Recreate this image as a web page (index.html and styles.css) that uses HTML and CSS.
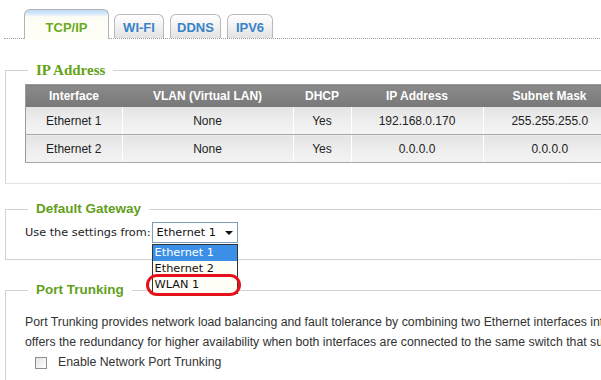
FILE: index.html
```html
<!DOCTYPE html>
<html>
<head>
<meta charset="utf-8">
<link rel="stylesheet" href="styles.css">
</head>
<body>
<div class="page">
  <div class="tabs">
    <div class="tab tab-active">TCP/IP</div>
    <div class="tab tab-wifi">WI-FI</div>
    <div class="tab tab-ddns">DDNS</div>
    <div class="tab tab-ipv6">IPV6</div>
  </div>

  <fieldset class="box box-ip">
    <legend class="legend legend-serif">IP Address</legend>
    <table class="iptable">
      <thead>
        <tr>
          <th class="c-if">Interface</th>
          <th class="c-vlan">VLAN (Virtual LAN)</th>
          <th class="c-dhcp">DHCP</th>
          <th class="c-ip">IP Address</th>
          <th class="c-mask">Subnet Mask</th>
        </tr>
      </thead>
      <tbody>
        <tr>
          <td>Ethernet 1</td>
          <td>None</td>
          <td>Yes</td>
          <td>192.168.0.170</td>
          <td>255.255.255.0</td>
        </tr>
        <tr>
          <td>Ethernet 2</td>
          <td>None</td>
          <td>Yes</td>
          <td>0.0.0.0</td>
          <td>0.0.0.0</td>
        </tr>
      </tbody>
    </table>
  </fieldset>

  <fieldset class="box box-gw">
    <legend class="legend">Default Gateway</legend>
    <div class="gw-row">
      <span class="gw-label">Use the settings from:</span>
      <div class="select-wrap">
        <div class="select"><span>Ethernet 1</span><span class="arrow"></span></div>
        <ul class="options">
          <li class="opt opt-sel">Ethernet 1</li>
          <li class="opt">Ethernet 2</li>
          <li class="opt">WLAN 1</li>
        </ul>
        <div class="ring"></div>
      </div>
    </div>
  </fieldset>

  <fieldset class="box box-pt">
    <legend class="legend">Port Trunking</legend>
    <p class="desc">Port Trunking provides network load balancing and fault tolerance by combining two Ethernet interfaces into one to increase the bandwidth beyond the limits of any single interface, and at the same time<br>offers the redundancy for higher availability when both interfaces are connected to the same switch that supports Port Trunking.</p>
    <label class="check-row"><span class="checkbox"></span><span>Enable Network Port Trunking</span></label>
  </fieldset>
</div>
</body>
</html>
```

FILE: styles.css
```css
html, body {
  margin: 0;
  padding: 0;
  background: #ffffff;
  overflow: hidden;
}
body {
  width: 601px;
  height: 380px;
  font-family: "Liberation Sans", Arial, sans-serif;
}
.page {
  width: 1000px;
}

/* Tabs */
.tabs {
  display: flex;
  align-items: flex-end;
  height: 38px;
  margin-left: 4px;
  padding-left: 20px;
  border-bottom: 1px dotted #9c9c9c;
}
.tab {
  box-sizing: border-box;
  height: 24px;
  border: 1px solid #b9b9b9;
  border-bottom: none;
  border-radius: 6px 6px 0 0;
  background: linear-gradient(#ffffff, #f3f3f3 45%, #e2e2e2);
  font: bold 13px/13px "Liberation Sans", Arial, sans-serif;
  color: #3a83c9;
  text-align: center;
  padding-bottom: 4px;
  display: flex;
  align-items: flex-end;
  justify-content: center;
}
.tab-active {
  width: 85px;
  height: 30px;
  margin-bottom: -1px;
  padding-bottom: 5px;
  margin-right: 5px;
  color: #6aab1e;
  background: linear-gradient(#bcdcf6 0, #d8eafa 4px, #fdfdf6 7px, #fffff8);
  border-color: #b3b3b3;
}
.tab-wifi { width: 50px; margin-right: 6px; }
.tab-ddns { width: 51px; margin-right: 6px; }
.tab-ipv6 { width: 46px; }

/* Fieldsets */
.box {
  margin: 0 0 0 5px;
  min-width: 0;
  width: 940px;
  box-sizing: border-box;
  border: 1px solid #d2d2d2;
  border-right: none;
  background: linear-gradient(100deg, #ffffff 60%, #f6f6f6);
}
.legend {
  margin-left: 3px;
  padding: 0 8px;
  font: bold 13.5px/16px "Liberation Sans", Arial, sans-serif;
  color: #62a01c;
}
.legend-serif {
  font: bold 15px/18px "Liberation Serif", "Times New Roman", serif;
  color: #63a316;
}
.box-ip {
  margin-top: 22px;
  padding: 5px 0 20px 19px;
  border-bottom-color: #e2e2e2;
}
.box-gw {
  margin-top: 17px;
  padding: 5px 0 16px 19px;
}
.box-pt {
  margin-top: 22px;
  padding: 14px 0 20px 19px;
}

/* Table */
.iptable {
  border-collapse: collapse;
  border: 1px solid #9a9a9a;
  font: 12px "Liberation Sans", Arial, sans-serif;
  color: #222;
}
.iptable th {
  height: 22px;
  padding: 0;
  background: linear-gradient(#8a8a8a, #787878);
  color: #ffffff;
  font-weight: bold;
  text-align: center;
}
.iptable td {
  height: 27px;
  padding: 0;
  text-align: center;
  background: linear-gradient(#e3e3e3, #efefef 60%, #f3f3f3);
  border-left: 1px solid #ffffff;
  border-bottom: 1px solid #a8a8a8;
}
.iptable td:first-child { border-left: none; }
.c-if { width: 96px; }
.c-vlan { width: 171px; }
.c-dhcp { width: 58px; }
.c-ip { width: 132px; }
.c-mask { width: 133px; }

/* Gateway row */
.gw-row {
  display: flex;
  align-items: center;
  height: 21px;
  font: 11.3px "DejaVu Sans", Verdana, sans-serif;
  color: #222;
}
.gw-label {
  margin-right: 1px;
}
.select-wrap {
  position: relative;
}
.select {
  box-sizing: border-box;
  width: 86px;
  height: 21px;
  border: 1px solid #7f9db9;
  background: #ffffff;
  display: flex;
  align-items: center;
  justify-content: space-between;
  padding: 0 4px 0 4px;
  color: #111;
}
.arrow {
  width: 0;
  height: 0;
  border-left: 4px solid transparent;
  border-right: 4px solid transparent;
  border-top: 4px solid #111;
  margin-top: 1px;
}
.options {
  position: absolute;
  left: 0;
  top: 22px;
  margin: 0;
  padding: 0;
  list-style: none;
  box-sizing: border-box;
  width: 86px;
  border: 1px solid #333;
  background: #fffef6;
  z-index: 2;
}
.opt {
  height: 16px;
  line-height: 16px;
  padding-left: 2px;
  color: #111;
}
.opt-sel {
  background: #3b8fe6;
  color: #ffffff;
}
.ring {
  position: absolute;
  left: -6px;
  top: 52px;
  box-sizing: border-box;
  width: 95px;
  height: 22px;
  border: 3px solid #e5121c;
  border-radius: 11px;
  z-index: 3;
}

/* Port trunking */
.desc {
  margin: 0;
  font: 12.3px/20px "Liberation Sans", Arial, sans-serif;
  color: #333;
  white-space: nowrap;
}
.check-row {
  display: flex;
  align-items: center;
  height: 20px;
  padding-left: 10px;
  font: 12.3px/20px "Liberation Sans", Arial, sans-serif;
  color: #333;
}
.checkbox {
  box-sizing: border-box;
  width: 12px;
  height: 12px;
  border: 1px solid #8e8e8e;
  background: linear-gradient(135deg, #e4e4e4, #ffffff);
  margin-right: 11px;
  margin-top: 2px;
}
```
